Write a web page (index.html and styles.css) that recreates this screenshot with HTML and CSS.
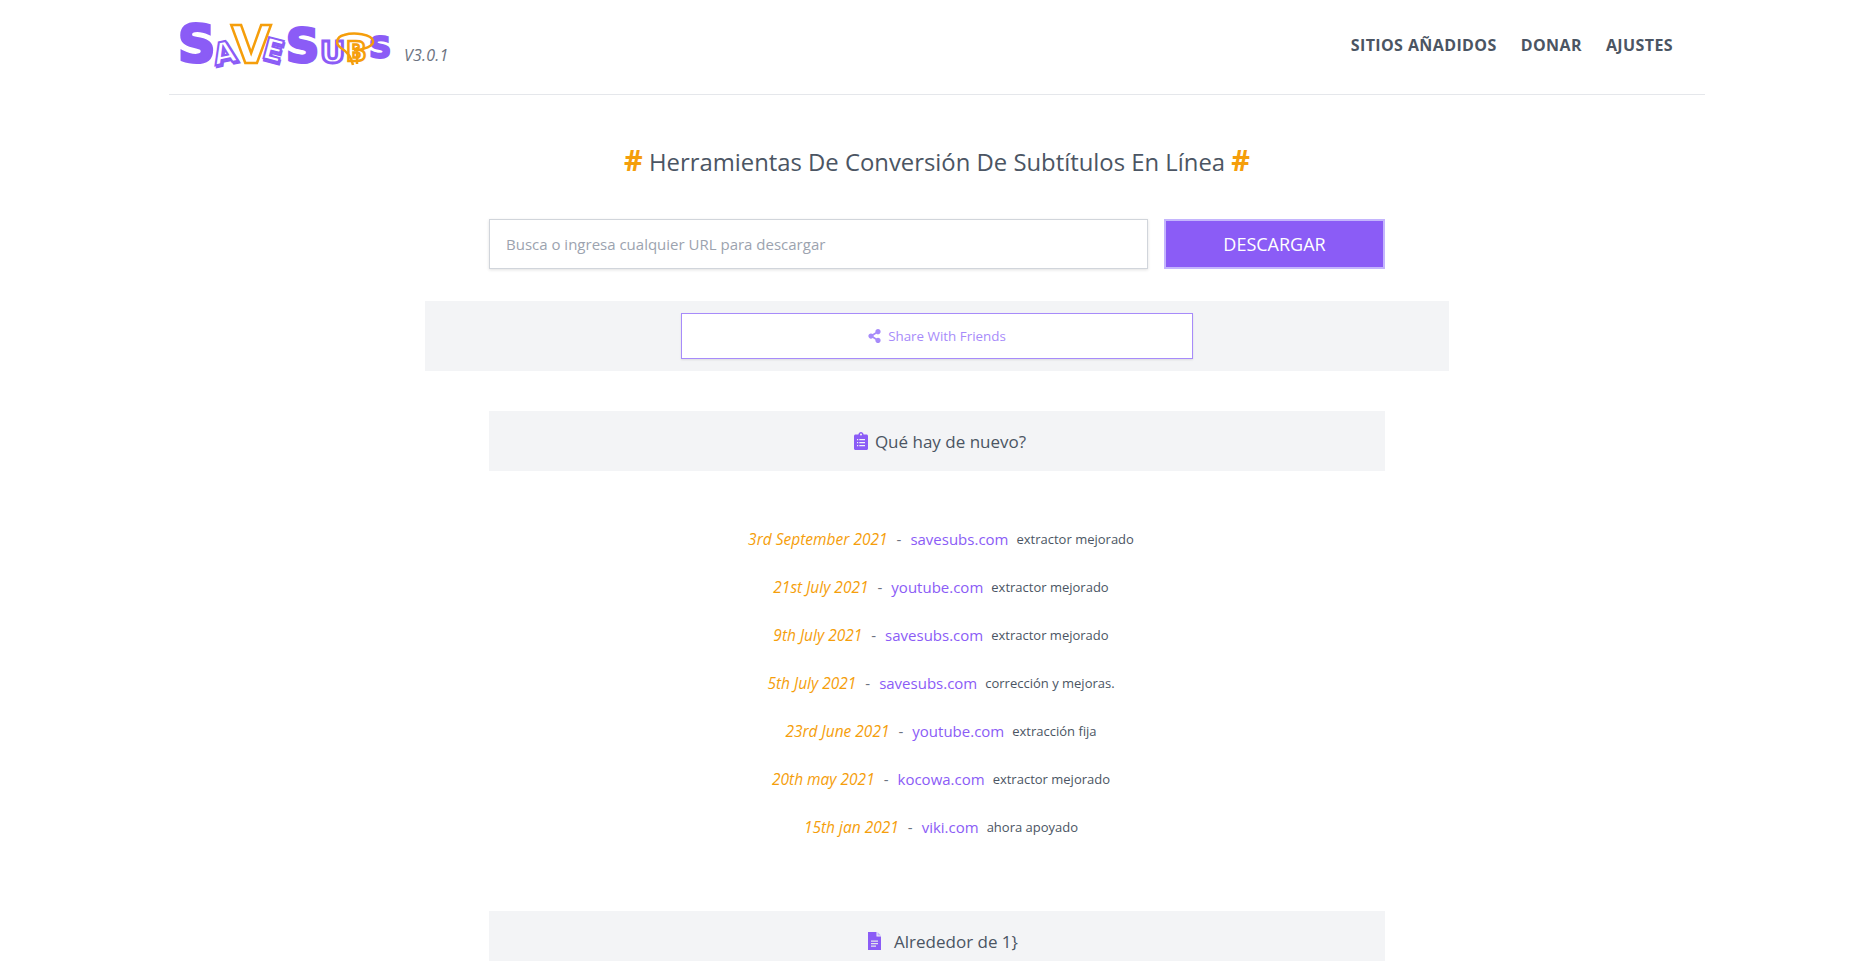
FILE: index.html
```html
<!DOCTYPE html>
<html lang="es">
<head>
<meta charset="utf-8">
<title>SaveSubs</title>
<link rel="stylesheet" href="styles.css">
</head>
<body>
<div class="container">
  <header class="header">
    <div class="brand">
      <svg class="logo" width="220" height="56" viewBox="0 0 220 56" role="img" aria-label="SaveSubs">
        <text class="lg solid thick" x="0" y="45" font-size="52">S</text>
        <text class="lg shade" x="36" y="48" font-size="30" transform="rotate(-12 48 36)">A</text>
        <text class="lg hollow" x="35" y="46" font-size="30" transform="rotate(-12 48 36)">A</text>
        <text class="lg shade" x="86" y="46" font-size="30" transform="rotate(15 97 34)">E</text>
        <text class="lg hollow" x="85" y="44" font-size="30" transform="rotate(15 97 34)">E</text>
        <text class="lg hollow-o" x="53" y="46" font-size="52">V</text>
        <text class="lg solid thick" x="108" y="45" font-size="46">S</text>
        <text class="lg hollow wide" x="142" y="46" font-size="31">U</text>
        <text class="lg hollow-o" x="168" y="44" font-size="27">B</text>
        <text class="lg solid" x="191" y="41" font-size="31">S</text>
        <path class="swirl" d="M175 48 C173 38 168 34 163 31 C157 27 158 20 166 18 C176 15 194 17 195 24 C196 29 186 33 176 33 M179 30 L179 47"/>
      </svg>
      <span class="version">V3.0.1</span>
    </div>
    <nav class="nav">
      <a href="#">SITIOS AÑADIDOS</a>
      <a href="#">DONAR</a>
      <a href="#">AJUSTES</a>
    </nav>
  </header>

  <main class="main">
    <h1 class="title"><span class="hash">#</span> Herramientas De Conversión De Subtítulos En Línea <span class="hash">#</span></h1>

    <form class="search">
      <input class="search-input" type="text" placeholder="Busca o ingresa cualquier URL para descargar">
      <button class="search-btn" type="button">DESCARGAR</button>
    </form>

    <div class="share-band">
      <a class="share-btn" href="#">
        <svg class="share-icon" width="13" height="14" viewBox="0 0 448 512"><path d="M352 320c-22.600 0-43.400 7.800-59.800 20.900l-102.500-64.100a96.600 96.600 0 0 0 0-41.700l102.500-64.100C308.600 184.200 329.400 192 352 192c53 0 96-43 96-96S405 0 352 0s-96 43-96 96c0 7.200.8 14.100 2.300 20.800l-102.500 64.100C139.400 167.800 118.600 160 96 160c-53 0-96 43-96 96s43 96 96 96c22.600 0 43.400-7.800 59.800-20.900l102.500 64.100A96.300 96.300 0 0 0 256 416c0 53 43 96 96 96s96-43 96-96-43-96-96-96z"/></svg>
        Share With Friends
      </a>
    </div>

    <section class="panel-head news-head">
      <svg class="clip-icon" width="14" height="18" viewBox="0 0 14 18"><path fill-rule="evenodd" d="M1.500 2.500H4.400C4.600 1.100 5.700 0 7 0s2.400 1.100 2.600 2.500h2.900c.8 0 1.500.7 1.500 1.500v12.500c0 .8-.7 1.500-1.500 1.500h-11C.7 18 0 17.300 0 16.500V4c0-.8.7-1.500 1.500-1.500zM7 1.500a1 1 0 1 0 0 2 1 1 0 0 0 0-2zM3 7v1.200h1.200V7zm2.300 0v1.200H11V7zM3 10v1.200h1.200V10zm2.300 0v1.200H11V10zM3 13v1.200h1.200V13zm2.300 0v1.200H11V13z"/></svg>
      <span>Qué hay de nuevo?</span>
    </section>

    <ul class="news">
      <li><em>3rd September 2021</em><span class="dash">-</span><a href="#">savesubs.com</a><small>extractor mejorado</small></li>
      <li><em>21st July 2021</em><span class="dash">-</span><a href="#">youtube.com</a><small>extractor mejorado</small></li>
      <li><em>9th July 2021</em><span class="dash">-</span><a href="#">savesubs.com</a><small>extractor mejorado</small></li>
      <li><em>5th July 2021</em><span class="dash">-</span><a href="#">savesubs.com</a><small>corrección y mejoras.</small></li>
      <li><em>23rd June 2021</em><span class="dash">-</span><a href="#">youtube.com</a><small>extracción fija</small></li>
      <li><em>20th may 2021</em><span class="dash">-</span><a href="#">kocowa.com</a><small>extractor mejorado</small></li>
      <li><em>15th jan 2021</em><span class="dash">-</span><a href="#">viki.com</a><small>ahora apoyado</small></li>
    </ul>

    <section class="panel-head about-head">
      <svg class="doc-icon" width="13" height="18" viewBox="0 0 13 18"><path d="M0 0h8.500v4.500H13V18H0z"/><path class="doc-fold" d="M9.500 0L13 3.500H9.500z"/><path class="doc-lines" d="M3 8.500h7v1.200H3zM3 11h7v1.200H3zM3 13.500h5v1.200H3z"/></svg>
      <span>Alrededor de 1}</span>
    </section>
  </main>
</div>
</body>
</html>
```

FILE: styles.css
```css
* { box-sizing: border-box; }
html, body { margin: 0; padding: 0; height: 961px; overflow: hidden; background: #fff; }
body { font-family: "Open Sans", "Noto Sans", sans-serif; color: #4a5568; }
a { text-decoration: none; color: inherit; }

.container { width: 1536px; margin-left: 169px; }

.header {
  height: 95px;
  display: flex;
  align-items: flex-start;
  justify-content: space-between;
  border-bottom: 1px solid #e5e7eb;
}
.brand { display: flex; align-items: flex-start; padding: 17px 0 0 9px; }
.logo { display: block; overflow: visible; }
.lg { font-family: "DejaVu Sans", sans-serif; font-weight: 700; }
.solid { fill: #8b5cf6; stroke: #8b5cf6; stroke-width: 2px; }
.thick { stroke-width: 3px; }
.shade { fill: #a78bfa; stroke: #8b5cf6; stroke-width: 2px; }
.hollow { fill: #fff; stroke: #8b5cf6; stroke-width: 2px; }
.wide { stroke-width: 3px; }
.hollow-o { fill: #fff; stroke: #f59e0b; stroke-width: 2.500px; }
.swirl { fill: none; stroke: #f59e0b; stroke-width: 2.500px; }
.version { margin: 27px 0 0 6px; font-size: 16px; letter-spacing: .2px; font-style: italic; color: #6b7280; }

.nav { display: flex; gap: 24px; padding: 34px 32px 0 0; font-size: 16px; letter-spacing: .4px; line-height: 22px; font-weight: 700; color: #4b5563; }

.main { display: flex; flex-direction: column; align-items: center; }
.title { margin: 50px 0 0; height: 32px; font-size: 23.850px; line-height: 32px; font-weight: 400; color: #4b5563; }
.hash { color: #f59e0b; font-weight: 700; font-size: 29px; line-height: 1; }

.search { margin-top: 42px; width: 896px; display: flex; justify-content: space-between; }
.search-input {
  width: 659px; height: 50px; padding: 0 16px;
  border: 1px solid #d1d5db; background: #fff;
  box-shadow: 0 1px 3px rgba(0,0,0,.12);
  font: 15px "Open Sans", sans-serif; color: #4b5563; outline: none;
}
.search-input::placeholder { color: #9ca3af; opacity: 1; }
.search-btn {
  width: 221px; height: 50px;
  background: #8b5cf6; border: 2px solid #c4b5fd; color: #fff;
  font: 18px "Open Sans", sans-serif;
}

.share-band { margin-top: 32px; width: 1024px; height: 70px; background: #f3f4f6; display: flex; align-items: center; justify-content: center; }
.share-btn {
  width: 512px; height: 46px;
  background: #fff; border: 1px solid #a78bfa;
  box-shadow: 0 1px 2px rgba(0,0,0,.1);
  display: flex; align-items: center; justify-content: center; gap: 7px;
  font-size: 13.400px; color: #a78bfa;
}
.share-icon { fill: #a78bfa; }

.panel-head {
  width: 896px; height: 60px; background: #f3f4f6;
  display: flex; align-items: center; justify-content: center;
  font-size: 17px; color: #4b5563;
}
.news-head { margin-top: 40px; padding-left: 6px; gap: 7px; }
.about-head { margin-top: 60px; padding-left: 12px; gap: 13px; }
.clip-icon, .doc-icon { fill: #8b5cf6; }
.doc-fold { fill: #c4b5fd; }
.doc-lines { fill: #e5e7eb; }

.news { list-style: none; margin: 44px 0 0; padding: 0 0 0 8px; width: 896px; }
.news li { height: 48px; display: flex; align-items: center; justify-content: center; line-height: 48px; font-size: 15px; }
.news em { color: #f59e0b; font-size: 15.500px; }
.dash { margin: 0 9px; color: #6b7280; }
.news a { color: #8b5cf6; }
.news small { margin-left: 8px; font-size: 13px; color: #4b5563; }
```
